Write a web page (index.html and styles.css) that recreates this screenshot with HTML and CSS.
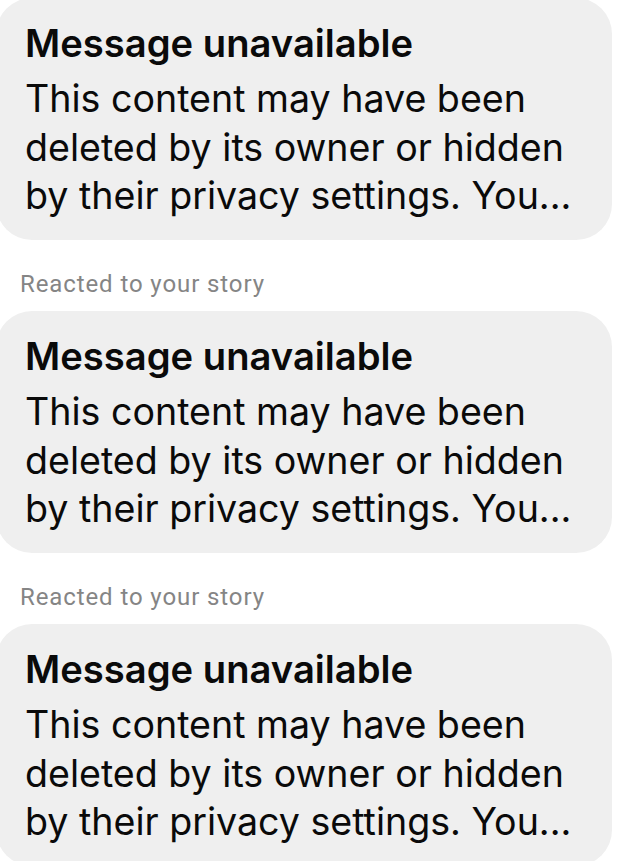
FILE: index.html
```html
<!DOCTYPE html>
<html lang="en">
<head>
<meta charset="utf-8">
<title>Messages</title>
<link rel="stylesheet" href="styles.css">
</head>
<body>
<div class="thread">
  <div class="bubble">
    <div class="title">Message unavailable</div>
    <div class="body">This content may have been<br>deleted by its owner or hidden<br>by their privacy settings. You...</div>
  </div>
  <div class="label">Reacted to your story</div>
  <div class="bubble">
    <div class="title">Message unavailable</div>
    <div class="body">This content may have been<br>deleted by its owner or hidden<br>by their privacy settings. You...</div>
  </div>
  <div class="label">Reacted to your story</div>
  <div class="bubble">
    <div class="title">Message unavailable</div>
    <div class="body">This content may have been<br>deleted by its owner or hidden<br>by their privacy settings. You...</div>
  </div>
</div>
</body>
</html>
```
FILE: styles.css
```css
html, body {
  margin: 0;
  padding: 0;
  background: #ffffff;
  overflow: hidden;
}
body {
  font-family: Inter, "Liberation Sans", Arial, sans-serif;
  color: #0a0a0a;
}
.thread {
  display: flex;
  flex-direction: column;
  margin-top: -2px;
  margin-left: -4px;
  width: 616px;
}
.bubble {
  background: #efefef;
  border-radius: 36px;
  padding: 21px 20px 20px 29px;
  height: 242px;
  box-sizing: border-box;
}
.title {
  font-weight: 600;
  font-size: 38.2px;
  line-height: 48px;
  margin-bottom: 8px;
}
.body {
  font-size: 37.6px;
  line-height: 48.5px;
  white-space: nowrap;
}
.label {
  font-family: Roboto, "Liberation Sans", sans-serif;
  font-size: 24px;
  line-height: 30px;
  color: #858585;
  letter-spacing: 0.9px;
  margin: 29px 0 12px 24px;
}
```
